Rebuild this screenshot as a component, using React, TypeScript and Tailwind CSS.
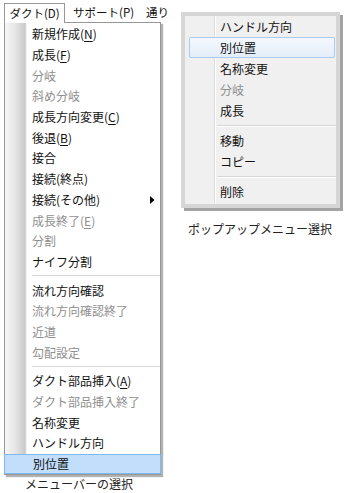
import React from "react";

const FONT = { fontFamily: '"Noto Sans CJK JP", "Noto Sans", sans-serif' };

type Item =
  | { label: React.ReactNode; disabled?: boolean; arrow?: boolean; sel?: boolean }
  | "sep";

const U = ({ c }: { c: string }) => (
  <span className="underline underline-offset-[2px] decoration-1">{c}</span>
);

const leftItems: Item[] = [
  { label: <>新規作成(<U c="N" />)</> },
  { label: <>成長(<U c="F" />)</> },
  { label: "分岐", disabled: true },
  { label: "斜め分岐", disabled: true },
  { label: <>成長方向変更(<U c="C" />)</> },
  { label: <>後退(<U c="B" />)</> },
  { label: "接合" },
  { label: "接続(終点)" },
  { label: "接続(その他)", arrow: true },
  { label: <>成長終了(<U c="E" />)</>, disabled: true },
  { label: "分割", disabled: true },
  { label: "ナイフ分割" },
  "sep",
  { label: "流れ方向確認" },
  { label: "流れ方向確認終了", disabled: true },
  { label: "近道", disabled: true },
  { label: "勾配設定", disabled: true },
  "sep",
  { label: <>ダクト部品挿入(<U c="A" />)</> },
  { label: "ダクト部品挿入終了", disabled: true },
  { label: "名称変更" },
  { label: "ハンドル方向" },
  { label: "別位置", sel: true },
];

const rightItems: Item[] = [
  { label: "ハンドル方向" },
  { label: "別位置", sel: true },
  { label: "名称変更" },
  { label: "分岐", disabled: true },
  { label: "成長" },
  "sep",
  { label: "移動" },
  { label: "コピー" },
  "sep",
  { label: "削除" },
];

function LeftMenu() {
  return (
    <div className="ml-[4px] w-[157px] border border-[#979797] bg-white shadow-[2px_2px_1px_rgba(0,0,0,0.3)] bg-[linear-gradient(to_right,#f6f6f6_0px,#e6e6e6_10px,#c9c9c9_20px,#e2e2e2_21px,#ffffff_22px)] pt-px">
      {leftItems.map((it, i) => {
        if (it === "sep")
          return (
            <div key={i} className="h-[8px] flex flex-col justify-center pl-[27px]">
              <div className="h-px bg-[#d5d5d5]" />
              <div className="h-px bg-white" />
            </div>
          );
        return (
          <div
            key={i}
            className={
              "h-[20.7px] flex items-center pl-[27px] pr-[4px] text-[12px] leading-none " +
              (it.sel
                ? "bg-[#c2defb] border border-[#80b9ee] -mx-px pl-[28px] "
                : "") +
              (it.disabled ? "text-[#8f8f8f]" : "text-[#111]")
            }
          >
            <span className="flex-1">{it.label}</span>
            {it.arrow && (
              <svg width="5" height="8" viewBox="0 0 5 8" className="mr-[1px]">
                <path d="M0 0 L4.5 4 L0 8 Z" fill="#000" />
              </svg>
            )}
          </div>
        );
      })}
    </div>
  );
}

function PopupMenu() {
  return (
    <div className="ml-[11px] mt-[12px] w-[159px] border-[4px] border-[#d6d6d6] shadow-[3px_3px_0_#a3a3a3] bg-[#f0f0f0] bg-[linear-gradient(to_right,#f0f0f0_0px,#f0f0f0_29px,#dcdcdc_29px,#dcdcdc_30px,#ffffff_30px,#ffffff_31px,#f0f0f0_31px)] pb-[2px]">
      {rightItems.map((it, i) => {
        if (it === "sep")
          return (
            <div key={i} className="h-[9px] flex flex-col justify-center pl-[32px]">
              <div className="h-px bg-[#d7d7d7]" />
              <div className="h-px bg-white" />
            </div>
          );
        return (
          <div
            key={i}
            className={
              "h-[21px] flex items-center text-[12px] leading-none " +
              (it.sel
                ? "ml-[4px] mr-[1px] pl-[30px] rounded-[2px] border border-[#a9cbef] bg-[linear-gradient(to_bottom,#f4f8fd,#e3edf9)] "
                : "pl-[35px] ") +
              (it.disabled ? "text-[#8f8f8f]" : "text-[#111]")
            }
          >
            {it.label}
          </div>
        );
      })}
    </div>
  );
}

export default function App() {
  return (
    <div className="w-[350px] h-[493px] bg-white flex overflow-hidden" style={FONT}>
      <div className="w-[170px] shrink-0 flex flex-col overflow-hidden">
        <div className="h-[22px] flex items-end text-[11.5px] leading-none text-[#111] whitespace-nowrap">
          <div className="ml-[4px] w-[61px] h-[20px] -mb-px relative z-10 border border-b-0 border-[#979797] bg-white flex items-center justify-center">
            ダクト(D)
          </div>
          <div className="ml-[8px] h-[19px] flex items-center">サポート(P)</div>
          <div className="ml-[12px] h-[19px] flex items-center">通り</div>
        </div>
        <LeftMenu />
        <div className="mt-[2px] pl-[25px] text-[12px] leading-[14px] text-[#222]">
          メニューバーの選択
        </div>
      </div>
      <div className="flex-1 flex flex-col">
        <PopupMenu />
        <div className="mt-[14px] pl-[18px] text-[12px] leading-[14px] text-[#222]">
          ポップアップメニュー選択
        </div>
      </div>
    </div>
  );
}
